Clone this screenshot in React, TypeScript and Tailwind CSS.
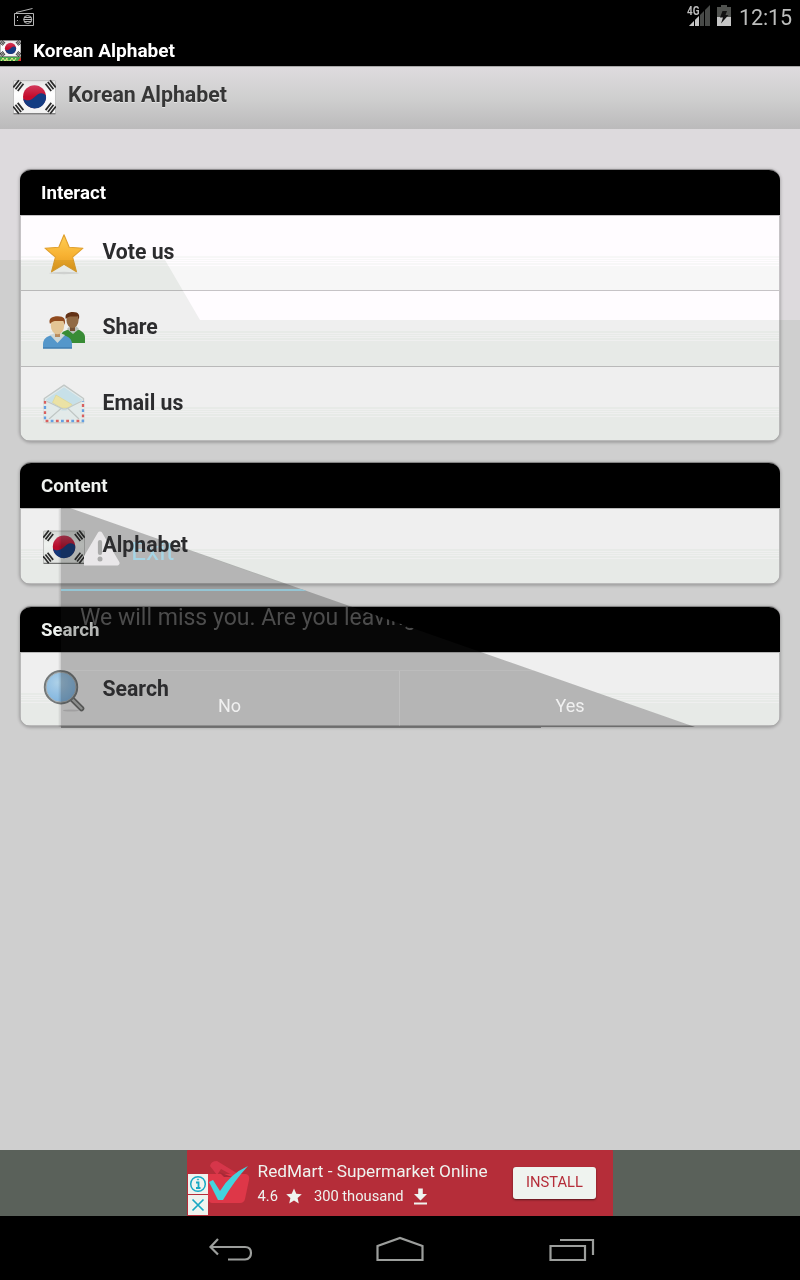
import type { ReactNode } from "react";

function Flag({ className }: { className: string }) {
  const bars = (x: number, y: number, angle: number) => (
    <g transform={`translate(${x} ${y}) rotate(${angle})`} fill="#2a2a2a">
      <rect x="-4.5" y="-3.6" width="9" height="1.7" />
      <rect x="-4.5" y="-0.8" width="9" height="1.7" />
      <rect x="-4.5" y="2" width="9" height="1.7" />
    </g>
  );
  return (
    <svg className={className} viewBox="0 0 42 34">
      <defs>
        <linearGradient id="flagFace" x1="0" y1="0" x2="0" y2="1">
          <stop offset="0" stopColor="#e4e4e4" />
          <stop offset="0.4" stopColor="#fff" />
          <stop offset="1" stopColor="#f1f1f1" />
        </linearGradient>
        <linearGradient id="flagRed" x1="0" y1="0" x2="0" y2="1">
          <stop offset="0" stopColor="#d23a5c" />
          <stop offset="0.5" stopColor="#c40c2c" />
        </linearGradient>
      </defs>
      <rect x="0.5" y="1" width="41" height="32.5" rx="1" fill="url(#flagFace)" stroke="#aaa" strokeWidth="0.6" />
      <path d="M0.5 33.3H41.5" stroke="#666" strokeWidth="1" />
      <circle cx="21" cy="16.7" r="11.2" fill="url(#flagRed)" />
      <path d="M10 18.5C12 21 17 21 20.5 17.5S28 11 32.2 15.5A11.2 11.2 0 0 1 10 18.5Z" fill="#143c82" />
      {bars(5.2, 5.8, -52)}
      {bars(36.8, 5.8, 52)}
      {bars(5.2, 28, 52)}
      {bars(36.8, 28, -52)}
    </svg>
  );
}

function StarIcon() {
  return (
    <svg className="h-[42px] w-[42px]" viewBox="0 0 42 42">
      <defs>
        <linearGradient id="gold" x1="0" y1="0" x2="0" y2="1">
          <stop offset="0" stopColor="#ffce55" />
          <stop offset="0.55" stopColor="#f7b232" />
          <stop offset="1" stopColor="#e3971a" />
        </linearGradient>
      </defs>
      <ellipse cx="21" cy="40" rx="15" ry="1.2" fill="#000" opacity="0.1" />
      <path d="M21 1.8L26.2 14.2L40 15.2L29.6 24.2L33.5 38.8L21 31.2L8.5 38.8L12.4 24.2L2 15.2L15.8 14.2Z" fill="url(#gold)" stroke="#e0a030" strokeWidth="1.1" strokeLinejoin="round" />
    </svg>
  );
}

function ShareIcon() {
  return (
    <svg className="h-[42px] w-[42px]" viewBox="0 -1 42 42">
      <path d="M18 34V26C19 22 24 21 28 20H33C38 21 42 24 42 28V34Z" fill="#3b9438" />
      <path d="M24 20L30 25L36 20L33 17H27Z" fill="#c6cbc9" />
      <rect x="27" y="15" width="5" height="7" fill="#7d5537" />
      <ellipse cx="29.5" cy="11.5" rx="6" ry="7.5" fill="#9b7049" />
      <path d="M22.8 10C21.5 5 25 3 30 3C36 3 37 6 35.8 11L34.5 7.5C30 8 26 6 22.8 10Z" fill="#6a3417" />
      <path d="M0 39.5V35C0 30 4 27 9 26H20C25 27 29 30 29 35V39.5Z" fill="#5a9fd8" />
      <path d="M7 26L14.5 34L22 26L17 24H12Z" fill="#dce3e5" />
      <rect x="12" y="20" width="5" height="8" fill="#c69363" />
      <ellipse cx="14.5" cy="16.5" rx="6.7" ry="8.8" fill="#f3cf9e" />
      <path d="M7 15C5 9.5 9 7.3 15 7.3C21 7.3 23 10 21.6 16L20.3 12C15 12.5 10 10.5 7 15Z" fill="#9a4e20" />
      <path d="M0 39H29" stroke="#3876af" strokeWidth="1" />
    </svg>
  );
}

function MailIcon() {
  return (
    <svg className="h-[42px] w-[42px]" viewBox="0 0 42 42">
      <path d="M1.3 14.5L21 1.2L40.5 14.5V38H1.3Z" fill="#f0f7fa" stroke="#cfd3d4" strokeWidth="1.4" strokeLinejoin="round" />
      <path d="M3 15.5L21 3.2L39 15.5L23 27H19Z" fill="#d5ecf8" />
      <path d="M13 11L29 20.5L26 24H18L9.5 18.5Z" fill="#fbefb0" stroke="#ecdf96" strokeWidth="0.6" />
      <path d="M2 16L20 24.5H23L40 16V37H2Z" fill="#f4f8f8" opacity="0.5" />
      <path d="M3 17L20 25H23L39 17M6 35L18 24.5M36 35L25 24.5" fill="none" stroke="#cdd2d3" strokeWidth="1.2" />
      <path d="M2 17V37H40V17" fill="none" stroke="#f4f7f7" strokeWidth="2.8" />
      <path d="M2 17V37H40V17" fill="none" stroke="#e86464" strokeWidth="2.3" strokeDasharray="2.8 7.5" />
      <path d="M2 17V37H40V17" fill="none" stroke="#69a8f0" strokeWidth="2.3" strokeDasharray="2.8 7.5" strokeDashoffset="-5.1" />
      <path d="M3 38.9H41" stroke="#ccc" strokeWidth="0.8" />
    </svg>
  );
}

function SearchIcon() {
  return (
    <svg className="h-[42px] w-[42px]" viewBox="0 0 42 42">
      <defs>
        <radialGradient id="lens" cx="0.4" cy="0.35" r="0.7">
          <stop offset="0" stopColor="#b9dcf8" />
          <stop offset="1" stopColor="#84bbee" />
        </radialGradient>
      </defs>
      <ellipse cx="28" cy="40.5" rx="8" ry="1" fill="#000" opacity="0.12" />
      <path d="M29 29L38.5 38.5" stroke="#707070" strokeWidth="5.5" strokeLinecap="round" />
      <path d="M30 30L38.5 38.5" stroke="#c4c4c4" strokeWidth="2.4" strokeLinecap="round" />
      <circle cx="18" cy="17.2" r="16" fill="url(#lens)" stroke="#7c7f82" strokeWidth="2.4" />
      <circle cx="18" cy="17.2" r="15" fill="none" stroke="#b8bdc1" strokeWidth="1" />
    </svg>
  );
}

function Row({ icon, label, className = "", children }: { icon: ReactNode; label: string; className?: string; children?: ReactNode }) {
  return (
    <div className={`relative flex h-[75px] items-start bg-[linear-gradient(#fffcff_40px,#f7f7f7_40px,#f7f7f7_42px,#fffcff_42px,#fffcff_43px,#f7f7f7_43px,#f7f7f7_44px,#fffcff_44px,#fffcff_45px,#f7f7f7_45px,#f7f7f7_46px,#fffcff_46px,#fffcff_47px,#f7f7f7_47px,#f7f7f7_49px,#fffcff_49px,#fffcff_50px,#f7f7f7_50px)] pl-[22px] ${className}`}>
      {children}
      <div className="relative mt-[17px] flex h-[42px] w-[42px] items-center">{icon}</div>
      <span className="relative z-20 ml-[17.5px] mt-[23px] whitespace-nowrap text-[21.2px] font-bold leading-[26px] text-[#2c2c2e]">{label}</span>
    </div>
  );
}

function Card({ title, className = "", children }: { title: string; className?: string; children: ReactNode }) {
  return (
    <section className={`overflow-hidden rounded-[11px] border-t border-[#8c8a8c] bg-[#c6c3c6] shadow-[0_1px_3px_1px_rgba(0,0,0,0.22)] ${className}`}>
      <h2 className="flex h-[45px] items-center bg-black pl-[21px] pt-[2px] text-[18.7px] font-bold text-white">{title}</h2>
      <div className="flex flex-col gap-px overflow-hidden rounded-b-[10px] px-px pb-px pt-px">{children}</div>
    </section>
  );
}

function Dialog() {
  return (
    <>
      <div className="absolute left-[58px] top-[509px] z-10 h-[218px] w-[3px] bg-linear-to-r from-transparent to-black/15" />
      <div className="absolute left-[60px] top-[508px] z-10 h-[220px] w-[638px] [clip-path:polygon(1px_0,10px_0,635px_219px,481px_219px,481px_220px,1px_220px)]">
        <div className="flex h-full w-[680px] flex-col border-b-2 border-black/15 bg-[rgba(25,25,25,0.27)] font-normal">
          <div className="flex h-[81px] items-center pl-[20px]">
            <svg className="h-[36px] w-[40px] [clip-path:inset(0_0_0_4px)]" viewBox="0 0 40 36">
              <path d="M20 3L37 32H3Z" fill="#e9e7e9" stroke="#e9e7e9" strokeWidth="5" strokeLinejoin="round" />
              <path d="M20 11V22" stroke="#aaa" strokeWidth="4.2" strokeLinecap="round" />
              <circle cx="20" cy="28" r="2.5" fill="#aaa" />
            </svg>
            <span className="ml-[11px] mt-[4px] text-[26.5px] text-[#a6d5e5]">Exit</span>
          </div>
          <div className="h-[2px] shrink-0 bg-[#94c5d4]" />
          <p className="h-[79px] shrink-0 whitespace-nowrap pl-[20px] pt-[9px] text-[23px] leading-[36px] text-[#4c4c4c]">We will miss you. Are you leaving?</p>
          <div className="grid flex-1 grid-cols-2 border-t border-white/10 text-[18px] leading-[24px] text-[#f0f0f0]">
            <span className="border-r border-white/15 pt-[23px] text-center">No</span>
            <span className="pt-[23px] text-center">Yes</span>
          </div>
        </div>
      </div>
    </>
  );
}

function StatusBar() {
  return (
    <div className="flex h-[34px] items-start pl-[14px] pr-[8px]">
      <svg className="mt-[8px] h-[18px] w-[20px]" viewBox="0 0 20 18" fill="none" stroke="#b5b5b5">
        <path d="M0.5 5.5H19.5V17.5H0.5ZM2 4.5L18.5 0.5M3.5 8V10M3.5 12V13" />
        <circle cx="13.7" cy="11.5" r="4" />
        <path d="M10 9.5H17.5M9.5 11.5H18M10 13.5H17.5" />
      </svg>
      <svg className="ml-auto mt-[5px] h-[22px] w-[24px]" viewBox="0 0 24 22">
        <path d="M23 0V21H2Z" fill="#484a48" />
        <path d="M12 11V21H2Z" fill="#c5c5c5" />
        <path d="M7.5 12V22M12.5 7V22M17.5 2V22" stroke="#000" strokeWidth="1" />
        <text x="0" y="10" fill="#bbb" stroke="#000" strokeWidth="2" paintOrder="stroke" fontSize="12" fontWeight="700" textLength="12.5" lengthAdjust="spacingAndGlyphs">4G</text>
      </svg>
      <svg className="ml-[6px] mt-[5px] h-[21px] w-[14px]" viewBox="0 0 14 21">
        <path d="M0 2H4V0H10V2H14V12H0Z" fill="#50524f" />
        <path d="M0 12H14V21H0Z" fill="#c6c6c6" />
        <path d="M5.5 6H10L8.5 10H11.5L4 18.5L6 12.5H3Z" fill="#111" />
      </svg>
      <span className="ml-[8px] mt-[5px] w-[53px] text-[21.5px] leading-[26px] tracking-[-0.1px] text-[#bdbebd]">12:15</span>
    </div>
  );
}

function AdBanner() {
  return (
    <div className="flex h-[66px] justify-center bg-[#5a615a]">
      <div className="flex w-[426px] rounded-t-[1px] bg-[#b52d39] pl-px text-[#eff3ef]">
        <div className="mt-[24px] flex w-[20px] flex-col gap-px">
          <svg className="h-[20px] w-[20px] bg-[#eff3ef]" viewBox="0 0 20 20" fill="none" stroke="#18a8c3">
            <circle cx="10" cy="10" r="7.3" strokeWidth="1.5" />
            <path d="M8 8.5H10.5V14M8 14H12.5" strokeWidth="1.8" />
            <circle cx="10" cy="5.5" r="0.6" strokeWidth="1" />
          </svg>
          <svg className="h-[20px] w-[20px] bg-[#eff3ef]" viewBox="0 0 20 20" fill="none" stroke="#18a8c3" strokeWidth="1.7">
            <path d="M4.5 4.5L15.5 15.5M15.5 4.5L4.5 15.5" />
          </svg>
        </div>
        <svg className="mt-[10px] h-[44px] w-[42px]" viewBox="0 0 42 44">
          <path d="M2 6Q3 1 9 1L32 15H24L13 9L9 15Z" fill="#d6364a" />
          <path d="M0 14H38Q42 15 41 20L37 39Q36 43 32 43H4Q1 43 0 38Z" fill="#de3748" />
          <path d="M11 12L24 17H16Z" fill="#a82837" />
          <path d="M1 22L5 20L12 31Q22 14 40 6Q26 21 15 40H10Z" fill="#43d3dd" />
        </svg>
        <div className="ml-[7.5px] flex flex-col pt-[11px]">
          <span className="whitespace-nowrap text-[17.25px] leading-[21px]">RedMart - Supermarket Online</span>
          <div className="mt-[4px] flex items-center text-[14.7px] leading-[20px]">
            <span>4.6</span>
            <svg className="ml-[8px] h-[16px] w-[16px]" viewBox="0 0 16 16" fill="#eff3ef">
              <path d="M8 0.5L10.3 5.8L15.8 6.2L11.6 10L12.8 15.5L8 12.5L3.2 15.5L4.4 10L0.2 6.2L5.7 5.8Z" />
            </svg>
            <span className="ml-[12px]">300 thousand</span>
            <svg className="ml-[10px] h-[17px] w-[13px]" viewBox="0 0 13 17" fill="#eff3ef">
              <path d="M4.2 0.5H8.8V6H13L6.5 12.5L0 6H4.2ZM0 14.5H13V16.5H0Z" />
            </svg>
          </div>
        </div>
        <button className="ml-auto mr-[17px] mt-[17px] flex h-[32px] w-[83px] items-center justify-center rounded-[3px] bg-[#eff3ef] pb-px text-[14.7px] text-[#b52d39] shadow-[0_1px_2px_rgba(0,0,0,0.5)]">INSTALL</button>
      </div>
    </div>
  );
}

function NavBar() {
  return (
    <nav className="flex h-[64px] justify-center bg-black pl-[2px] pt-[18px]">
      <svg className="h-[30px] w-[48px]" viewBox="0 0 48 30" fill="none" stroke="#9c9e9c" strokeWidth="2.2">
        <path d="M12 5L4.5 13L12 20.5M4.5 13H39Q45 13 45 19T39 25.5H22" />
      </svg>
      <svg className="ml-[121px] h-[30px] w-[50px]" viewBox="0 0 50 30" fill="none" stroke="#9c9e9c" strokeWidth="2.2">
        <path d="M2.5 26V12L25 4L47.5 12V26Z" />
      </svg>
      <svg className="ml-[123px] h-[30px] w-[48px]" viewBox="0 0 48 30" fill="none" stroke="#9c9e9c" strokeWidth="2.2">
        <path d="M2.5 12H37V26H2.5ZM12 6H45V21" />
      </svg>
    </nav>
  );
}

export default function App() {
  return (
    <div className="relative flex h-[1280px] w-[800px] flex-col overflow-hidden bg-[#dddadd] font-['Roboto',sans-serif]">
      <header className="h-[66px] bg-black">
        <StatusBar />
        <div className="flex h-[32px] items-center gap-[12px]">
          <div className="h-[21px] w-[21px] overflow-hidden">
            <Flag className="h-[17px] w-[21px]" />
            <svg className="h-[5px] w-[21px]" viewBox="0 0 21 5">
              <path d="M0 0H21V5H0Z" fill="#46a64a" />
              <path d="M1 4L3 1L5 4L7 1V4H10L12 1L14 4L16 1" stroke="#eaf38a" strokeWidth="1" fill="none" />
              <path d="M17 5L21 0V5Z" fill="#d33" />
            </svg>
          </div>
          <span className="pt-[2px] text-[19.05px] font-bold text-white">Korean Alphabet</span>
        </div>
      </header>
      <div className="flex h-[63px] items-start border-t border-[#a8a8a8] bg-[linear-gradient(#dedbde,#cfcfcf_50%,#bbbabb)] pl-[13px] pt-[11px]">
        <Flag className="mt-px h-[36px] w-[43px]" />
        <span className="ml-[12px] mt-[4px] text-[21.3px] font-bold leading-[26px] text-[#363636] [text-shadow:0_1px_0_#e4e4e4]">Korean Alphabet</span>
      </div>
      <main className="flex flex-1 flex-col gap-[21px] px-[20px] pt-[40px]">
        <Card title="Interact">
          <Row icon={<StarIcon />} label="Vote us" className="!h-[74px]" />
          <Row icon={<ShareIcon />} label="Share" />
          <Row icon={<MailIcon />} label="Email us" className="!h-[73px]" />
        </Card>
        <Card title="Content">
          <Row icon={<Flag className="h-[36px] w-[42px]" />} label="Alphabet" className="!h-[74px]">
            <div className="absolute inset-0 bg-[#fffcff] [clip-path:polygon(39px_0,50px_0,260px_100%,39px_100%)]" />
          </Row>
        </Card>
        <Card title="Search" className="mt-px">
          <Row icon={<SearchIcon />} label="Search" className="!h-[72px]">
            <div className="absolute inset-0 bg-[#fffcff] [clip-path:polygon(39px_0,462px_0,668px_100%,39px_100%)]" />
          </Row>
        </Card>
      </main>
      <div className="pointer-events-none absolute left-0 top-[260px] h-[890px] w-[800px] bg-[#eff2ef] mix-blend-multiply [clip-path:polygon(0_0,165px_0,200px_60px,100%_60px,100%_100%,0_100%)]" />
      <Dialog />
      <AdBanner />
      <NavBar />
    </div>
  );
}
